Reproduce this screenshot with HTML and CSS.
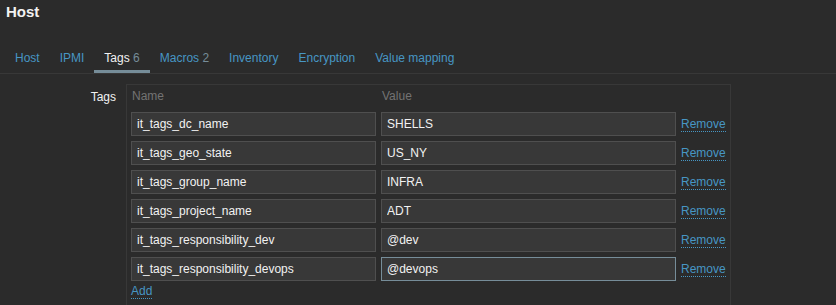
FILE: index.html
```html
<!DOCTYPE html>
<html lang="en">
<head>
    <meta charset="UTF-8">
    <title>Host</title>
    <link rel="stylesheet" href="styles.css">
</head>
<body>
    <h4 class="dialog-title">Host</h4>
    <ul class="tabs">
        <li><a href="#">Host</a></li>
        <li><a href="#">IPMI</a></li>
        <li class="active"><a href="#">Tags <span class="count">6</span></a></li>
        <li><a href="#">Macros <span class="count">2</span></a></li>
        <li><a href="#">Inventory</a></li>
        <li><a href="#">Encryption</a></li>
        <li><a href="#">Value mapping</a></li>
    </ul>
    <div class="form-row">
        <label class="form-label">Tags</label>
        <div class="tags-box">
            <div class="tags-grid">
                <div class="col-head">Name</div>
                <div class="col-head">Value</div>
                <div></div>

                <input class="field" type="text" value="it_tags_dc_name">
                <input class="field" type="text" value="SHELLS">
                <a class="link" href="#">Remove</a>

                <input class="field" type="text" value="it_tags_geo_state">
                <input class="field" type="text" value="US_NY">
                <a class="link" href="#">Remove</a>

                <input class="field" type="text" value="it_tags_group_name">
                <input class="field" type="text" value="INFRA">
                <a class="link" href="#">Remove</a>

                <input class="field" type="text" value="it_tags_project_name">
                <input class="field" type="text" value="ADT">
                <a class="link" href="#">Remove</a>

                <input class="field" type="text" value="it_tags_responsibility_dev">
                <input class="field" type="text" value="@dev">
                <a class="link" href="#">Remove</a>

                <input class="field" type="text" value="it_tags_responsibility_devops">
                <input class="field focused" type="text" value="@devops">
                <a class="link" href="#">Remove</a>
            </div>
            <a class="link add" href="#">Add</a>
        </div>
    </div>
</body>
</html>
```

FILE: styles.css
```css
body {
    margin: 0;
    background-color: #2b2b2b;
    color: #f2f2f2;
    font-family: 'Liberation Sans', Arial, sans-serif;
    font-size: 12px;
    line-height: 14px;
    overflow: hidden;
}
.dialog-title {
    margin: 0;
    padding: 3px 6px 0;
    font-size: 15px;
    line-height: 18px;
    font-weight: bold;
}
.tabs {
    list-style: none;
    margin: 22px 0 0;
    padding: 0 0 0 5px;
    display: flex;
    border-bottom: 1px solid #383838;
    height: 30px;
}
.tabs li {
    padding: 8px 10px 6px;
    border-bottom: 3px solid transparent;
}
.tabs li a {
    color: #4796c4;
    text-decoration: none;
}
.tabs li.active {
    border-bottom-color: #768d99;
}
.tabs li.active a {
    color: #f2f2f2;
}
.tabs .count {
    color: #768d99;
}
.form-row {
    display: flex;
    gap: 10px;
    margin-top: 10px;
}
.form-label {
    width: 116px;
    text-align: right;
    padding-top: 6px;
}
.tags-box {
    width: 594px;
    height: 216px;
    border: 1px solid #383838;
    border-bottom: none;
    padding: 4px 5px 0 4px;
}
.tags-grid {
    display: grid;
    grid-template-columns: 245px 295px 45px;
    column-gap: 5px;
    row-gap: 5px;
    align-items: center;
}
.col-head {
    color: #737373;
    padding-left: 1px;
    margin-bottom: 4px;
}
.field {
    box-sizing: border-box;
    height: 24px;
    margin: 0;
    padding: 0 5px;
    background-color: #383838;
    border: 1px solid #4f4f4f;
    color: #f2f2f2;
    font-family: inherit;
    font-size: 12px;
    outline: none;
}
.field.focused {
    border-color: #768d99;
}
.link {
    color: #4796c4;
    text-decoration: none;
    border-bottom: 1px dotted #4796c4;
    justify-self: start;
    line-height: 14px;
}
.add {
    display: inline-block;
    margin-top: 3px;
}
```
